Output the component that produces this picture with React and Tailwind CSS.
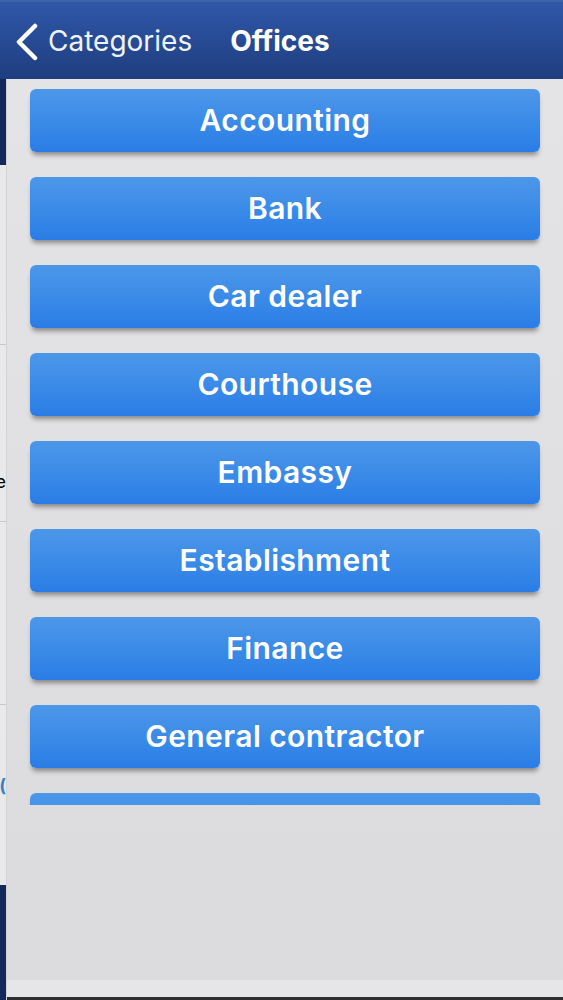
const offices = [
  'Accounting',
  'Bank',
  'Car dealer',
  'Courthouse',
  'Embassy',
  'Establishment',
  'Finance',
  'General contractor',
  '',
];

function OfficeButton({ label }) {
  return (
    <button className="h-[63px] w-full shrink-0 rounded-[6px] bg-gradient-to-b from-[#4b98e9] to-[#2a7de6] text-[30px] font-semibold tracking-[0.4px] text-white shadow-[0_5px_5px_-2px_rgba(0,0,0,0.4)] [font-family:Inter,'Liberation_Sans',sans-serif]">
      {label}
    </button>
  );
}

export default function App() {
  return (
    <div className="flex h-[1000px] w-[563px] flex-col overflow-hidden bg-[#dcdbdd] [font-family:Inter,'Liberation_Sans',sans-serif]">
      {/* nav bar */}
      <header className="flex h-[79px] shrink-0 items-center border-t-2 border-[#3c62a8] bg-gradient-to-b from-[#2f58a8] to-[#1f3d80] text-white">
        <svg width="26" height="38" viewBox="0 0 26 38" className="ml-[13px] mt-[2px]" fill="none">
          <polyline points="22,3 6,19 22,35" stroke="white" strokeWidth="4.5" strokeLinecap="round" strokeLinejoin="round" />
        </svg>
        <span className="ml-[9px] text-[28px] text-[#eef3fb]">Categories</span>
        <span className="ml-[38px] text-[28px] font-bold">Offices</span>
      </header>

      <div className="flex flex-1">
        {/* page peeking out underneath */}
        <div className="flex w-[6px] shrink-0 flex-col overflow-hidden bg-[#e9e9ea]">
          <div className="h-[86px] shrink-0 bg-[#14285c]" />
          <div className="h-[180px] shrink-0 border-b border-[#c9c9cb]" />
          <div className="relative h-[177px] shrink-0 border-b border-[#c9c9cb]">
            <span className="absolute right-0 top-[128px] text-[18px] leading-none text-black">e</span>
          </div>
          <div className="h-[183px] shrink-0 border-b border-[#c9c9cb]" />
          <div className="flex h-[180px] shrink-0 flex-col items-end gap-[18px] pt-[72px] text-[18px] font-bold leading-none text-[#3b7fd1]">
            <span>(</span>
          </div>
          <div className="flex-1 bg-[#14285c]" />
        </div>

        {/* sliding panel */}
        <div className="flex flex-1 flex-col border-l border-[#d3d3d5] bg-gradient-to-b from-[#e4e4e6] to-[#dbdadc]">
          <div className="flex h-[726px] shrink-0 flex-col gap-[25px] overflow-hidden px-[23px] pt-[10px]">
            {offices.map((o, i) => (
              <OfficeButton key={i} label={o} />
            ))}
          </div>
          <div className="flex-1" />
          <div className="h-[17px] shrink-0 bg-[#e6e5e7]" />
          <div className="h-[3px] shrink-0 bg-[#2e2e30]" />
        </div>
      </div>
    </div>
  );
}
